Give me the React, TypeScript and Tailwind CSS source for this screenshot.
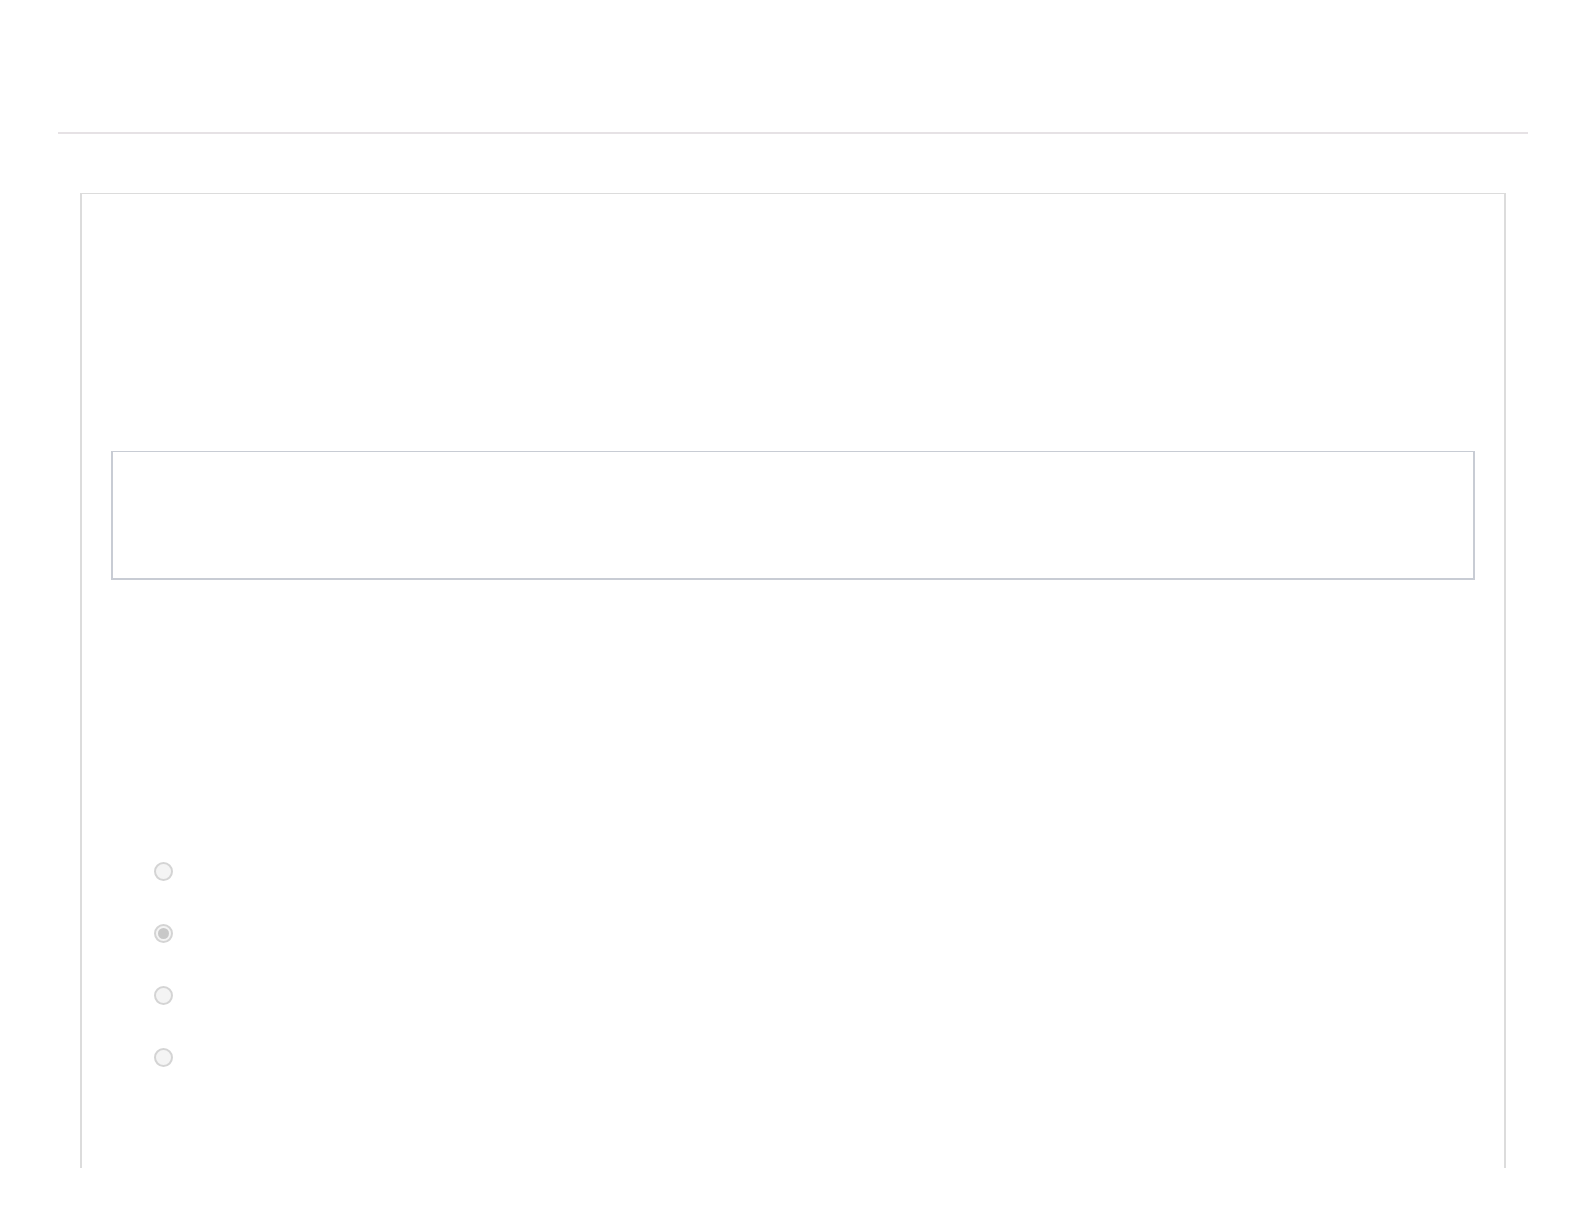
export default function App() {
  const radios = [false, true, false, false];
  return (
    <div className="min-h-[1224px] bg-white pt-[132px]" style={{ fontFamily: '"Liberation Sans", Arial, sans-serif' }}>
      <div className="ml-[58px] h-[2px] w-[1470px] bg-[#e6e2e5]" />

      <div className="ml-[80px] mt-[59px] h-[975px] w-[1426px] border-x-2 border-t border-[#dcdcdc] px-[29px] pt-[257px]">
        <div className="h-[129px] border-x-2 border-b-2 border-t border-[#c8ccd4]" />

        <div className="ml-[43px] mt-[282px] flex flex-col gap-[43px]">
          {radios.map((checked, i) => (
            <div key={i} className="flex h-[19px] items-center">
              <span className="flex h-[19px] w-[19px] items-center justify-center rounded-full border-2 border-[#d4d4d4] bg-[#f4f4f4]">
                {checked && <span className="h-[11px] w-[11px] rounded-full bg-[#c8c8c8]" />}
              </span>
            </div>
          ))}
        </div>
      </div>
    </div>
  );
}
